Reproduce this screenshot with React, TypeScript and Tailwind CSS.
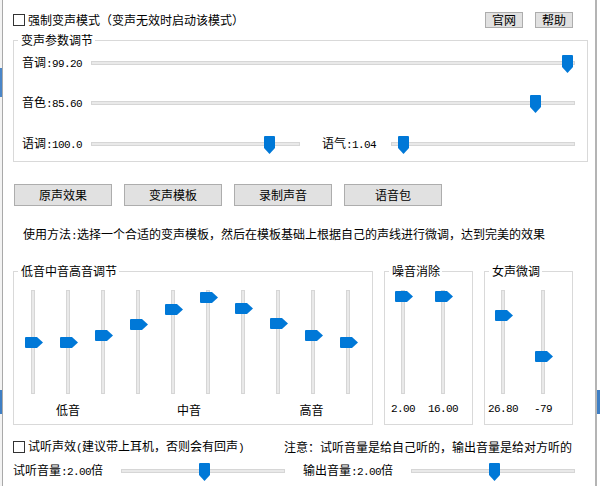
const mono = "font-['Liberation_Mono',monospace] text-[11px] tracking-[-0.6px]";

function DownThumb({ left }: { left: number }) {
  return (
    <svg width="11" height="18" viewBox="0 0 11 18" className="absolute top-[-7px]" style={{ left }}>
      <path d="M1 0H10A1 1 0 0 1 11 1V12L5.5 18L0 12V1A1 1 0 0 1 1 0Z" fill="#0078d7" />
    </svg>
  );
}

function RightThumb({ top }: { top: number }) {
  return (
    <svg width="18" height="11" viewBox="0 0 18 11" className="absolute left-[-7px]" style={{ top }}>
      <path d="M1 0H12L18 5.5L12 11H1A1 1 0 0 1 0 10V1A1 1 0 0 1 1 0Z" fill="#0078d7" />
    </svg>
  );
}

function HTrack({ className, pos }: { className: string; pos: number }) {
  return (
    <div className={`relative h-[4px] border border-[#d6d6d6] bg-[#e9e9e9] ${className}`}>
      <DownThumb left={pos} />
    </div>
  );
}

function VTrack({ pos }: { pos: number }) {
  return (
    <div className="relative h-[104px] w-[4px] border border-[#d6d6d6] bg-[#e9e9e9]">
      <RightThumb top={pos} />
    </div>
  );
}

function Label({ name, value, unit, className }: { name: string; value: string; unit?: string; className: string }) {
  return (
    <div className={`shrink-0 whitespace-nowrap ${className}`}>
      {name}
      <span className={mono}>{value}</span>
      {unit}
    </div>
  );
}

function Group({ title, className, children }: { title: string; className: string; children: React.ReactNode }) {
  return (
    <fieldset className={`border border-[#d9d9d9] ${className}`}>
      <legend className="ml-[4px] pl-[3px] pr-[2px] leading-[14px]">{title}</legend>
      {children}
    </fieldset>
  );
}

function Box() {
  return <div className="h-[12px] w-[12px] shrink-0 border border-[#333]" />;
}

function Column({ pos, value }: { pos: number; value: string }) {
  return (
    <div className="flex w-[4px] flex-col items-center">
      <VTrack pos={pos} />
      <span className={`mt-[7px] leading-[16px] whitespace-nowrap ${mono}`}>{value}</span>
    </div>
  );
}

const eq = [46, 46, 39, 28, 13, 1, 12, 27, 39, 46];

export default function App() {
  return (
    <div className="flex h-[486px] w-[600px] bg-white text-[12px] text-black font-['Noto_Sans_CJK_SC','Noto_Sans',sans-serif]">
      <div className="flex w-[2px] flex-col bg-[#f3f3f3]">
        <div className="h-[68px]" />
        <div className="h-[29px] bg-[#4a86c8]" />
        <div className="h-[293px]" />
        <div className="h-[24px] bg-[#3f7fc4]" />
      </div>
      <div className="w-px bg-[#a9a9a9]" />

      <main className="w-[592px] pl-[10px]">
        <div className="mt-[12px] flex h-[16px] w-[575px] items-center pr-[15px]">
          <Box />
          <span className="ml-[3px] leading-[16px]">强制变声模式（变声无效时启动该模式）</span>
          <button className="ml-auto flex h-[16px] w-[38px] items-center justify-center border border-[#adadad] bg-[#e1e1e1] leading-none">
            官网
          </button>
          <button className="ml-[12px] flex h-[16px] w-[38px] items-center justify-center border border-[#adadad] bg-[#e1e1e1] leading-none">
            帮助
          </button>
        </div>

        <Group title="变声参数调节" className="mt-[5px] h-[129px] w-[575px]">
          <div className="pl-[8px] pt-[6px]">
            <div className="flex h-[20px] items-center">
              <Label name="音调" value=":99.20" className="w-[69px]" />
              <HTrack className="w-[484px]" pos={470} />
            </div>
            <div className="mt-[20px] flex h-[20px] items-center">
              <Label name="音色" value=":85.60" className="w-[69px]" />
              <HTrack className="w-[484px]" pos={438} />
            </div>
            <div className="mt-[21px] flex h-[20px] items-center">
              <Label name="语调" value=":100.0" className="w-[69px]" />
              <HTrack className="w-[209px]" pos={172} />
              <Label name="语气" value=":1.04" className="ml-[22px] w-[69px]" />
              <HTrack className="w-[184px]" pos={6} />
            </div>
          </div>
        </Group>

        <div className="mt-[22px] ml-[1px] flex gap-[12px]">
          {["原声效果", "变声模板", "录制声音", "语音包"].map((t) => (
            <button key={t} className="flex h-[22px] w-[98px] items-center justify-center border border-[#adadad] bg-[#e1e1e1]">
              {t}
            </button>
          ))}
        </div>

        <p className="mt-[20px] ml-[10px] leading-[16px] whitespace-nowrap">
          使用方法<span className={mono}>:</span>选择一个合适的变声模板，然后在模板基础上根据自己的声线进行微调，达到完美的效果
        </p>

        <div className="mt-[20px] flex gap-[11px]">
          <Group title="低音中音高音调节" className="h-[161px] w-[360px]">
            <div className="pl-[17px] pt-[12px]">
              <div className="flex gap-[31px]">
                {eq.map((p, i) => (
                  <VTrack key={i} pos={p} />
                ))}
              </div>
              <div className="mt-[8px] ml-[-17px] grid w-[350px] grid-cols-10 leading-[16px]">
                <span className="col-start-2 ml-[3px] text-center">低音</span>
                <span className="col-span-2 col-start-5 text-center">中音</span>
                <span className="col-start-9 text-center">高音</span>
              </div>
            </div>
          </Group>

          <Group title="噪音消除" className="h-[161px] w-[89px]">
            <div className="flex gap-[36px] pl-[16px] pt-[12px]">
              <Column pos={0} value="2.00" />
              <Column pos={0} value="16.00" />
            </div>
          </Group>

          <Group title="女声微调" className="h-[161px] w-[89px]">
            <div className="flex gap-[36px] pl-[16px] pt-[12px]">
              <Column pos={19} value="26.80" />
              <Column pos={60} value="-79" />
            </div>
          </Group>
        </div>

        <div className="mt-[14px] flex h-[16px] w-[575px] items-center pr-[16px]">
          <Box />
          <span className="ml-[3px] whitespace-nowrap">
            试听声效<span className={mono}>(</span>建议带上耳机，否则会有回声<span className={mono}>)</span>
          </span>
          <span className="ml-auto whitespace-nowrap">注意：试听音量是给自己听的，输出音量是给对方听的</span>
        </div>

        <div className="mt-[6px] flex h-[20px] items-center">
          <Label name="试听音量" value=":2.00" unit="倍" className="w-[108px]" />
          <HTrack className="w-[164px]" pos={77} />
          <Label name="输出音量" value=":2.00" unit="倍" className="ml-[18px] w-[108px]" />
          <HTrack className="w-[164px]" pos={77} />
        </div>
      </main>

      <div className="w-[2px] bg-[#b4b4b4]" />
      <div className="flex flex-1 flex-col">
        <div className="h-[390px]" />
        <div className="h-[24px] bg-[#3f7fc4]" />
      </div>
    </div>
  );
}
